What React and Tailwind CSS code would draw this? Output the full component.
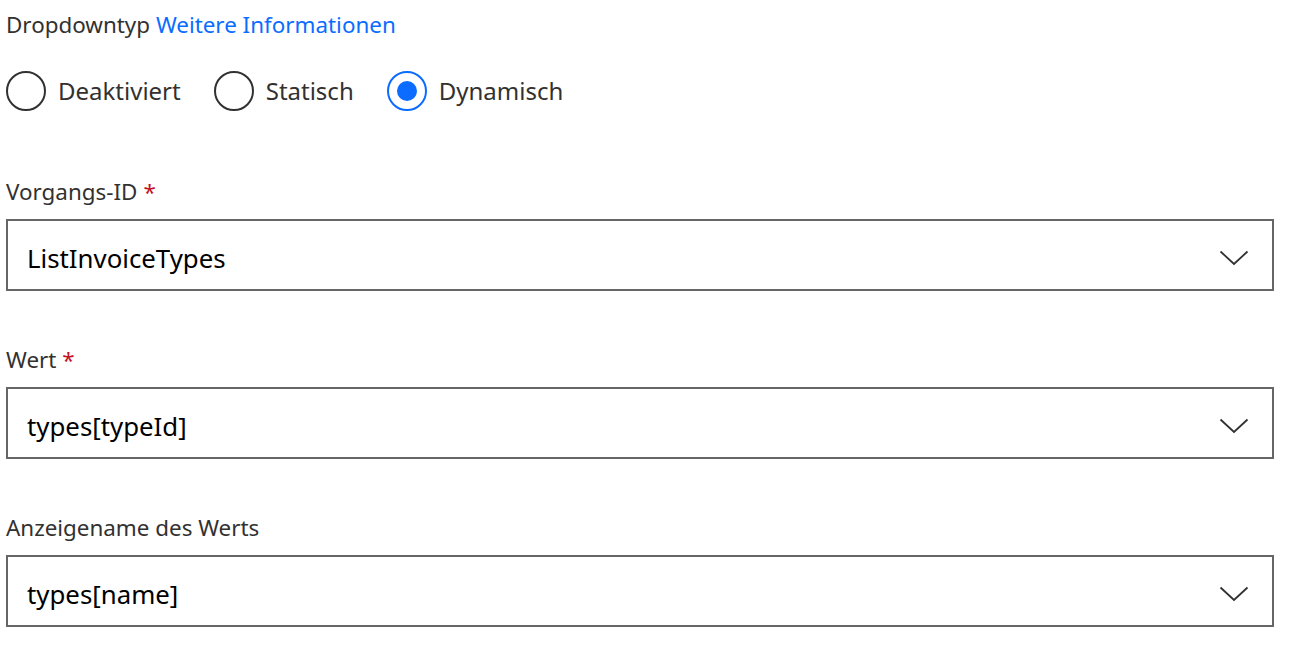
import React, { useState } from "react";

const font = { fontFamily: '"Noto Sans", "Open Sans", sans-serif' };

const Chevron = () => (
  <svg width="30" height="16" viewBox="0 0 30 16" fill="none" className="shrink-0">
    <path d="M1.5 1.5 L15 14 L28.5 1.5" stroke="#323130" strokeWidth="1.8" />
  </svg>
);

const Radio = ({ label, checked, onClick }) => (
  <button type="button" onClick={onClick} className="flex items-center gap-[12px] cursor-pointer">
    <span
      className={`flex items-center justify-center w-[40px] h-[40px] rounded-full border-2 ${
        checked ? "border-[#0b6cff]" : "border-[#323130]"
      }`}
    >
      {checked && <span className="w-[20px] h-[20px] rounded-full bg-[#0b6cff]" />}
    </span>
    <span className="text-[24px] text-[#323130]">{label}</span>
  </button>
);

const Field = ({ label, required, value }) => (
  <div className="flex flex-col">
    <div className="text-[22.4px] text-[#323130] h-[32px] leading-[32px] mb-[11px]">
      {label}
      {required && <span className="text-[#c50f1f] ml-[6px]">*</span>}
    </div>
    <div className="flex items-center justify-between h-[72px] border-2 border-[#666666] pl-[19px] pr-[23px] pt-[6px]">
      <span className="text-[25.8px] text-black">{value}</span>
      <Chevron />
    </div>
  </div>
);

export default function App() {
  const [mode, setMode] = useState("Dynamisch");
  return (
    <div className="w-[1290px] h-[648px] bg-white pl-[6px] pr-[16px] pt-[9px]" style={font}>
      <div className="text-[22.4px] text-[#323130] leading-[32px]">
        Dropdowntyp <a className="text-[#0b6cff]">Weitere Informationen</a>
      </div>
      <div className="flex items-center gap-[33px] mt-[30px]">
        {["Deaktiviert", "Statisch", "Dynamisch"].map((m) => (
          <Radio key={m} label={m} checked={mode === m} onClick={() => setMode(m)} />
        ))}
      </div>
      <div className="flex flex-col gap-[53px] mt-[65px]">
        <Field label="Vorgangs-ID" required value="ListInvoiceTypes" />
        <Field label="Wert" required value="types[typeId]" />
        <Field label="Anzeigename des Werts" value="types[name]" />
      </div>
    </div>
  );
}
